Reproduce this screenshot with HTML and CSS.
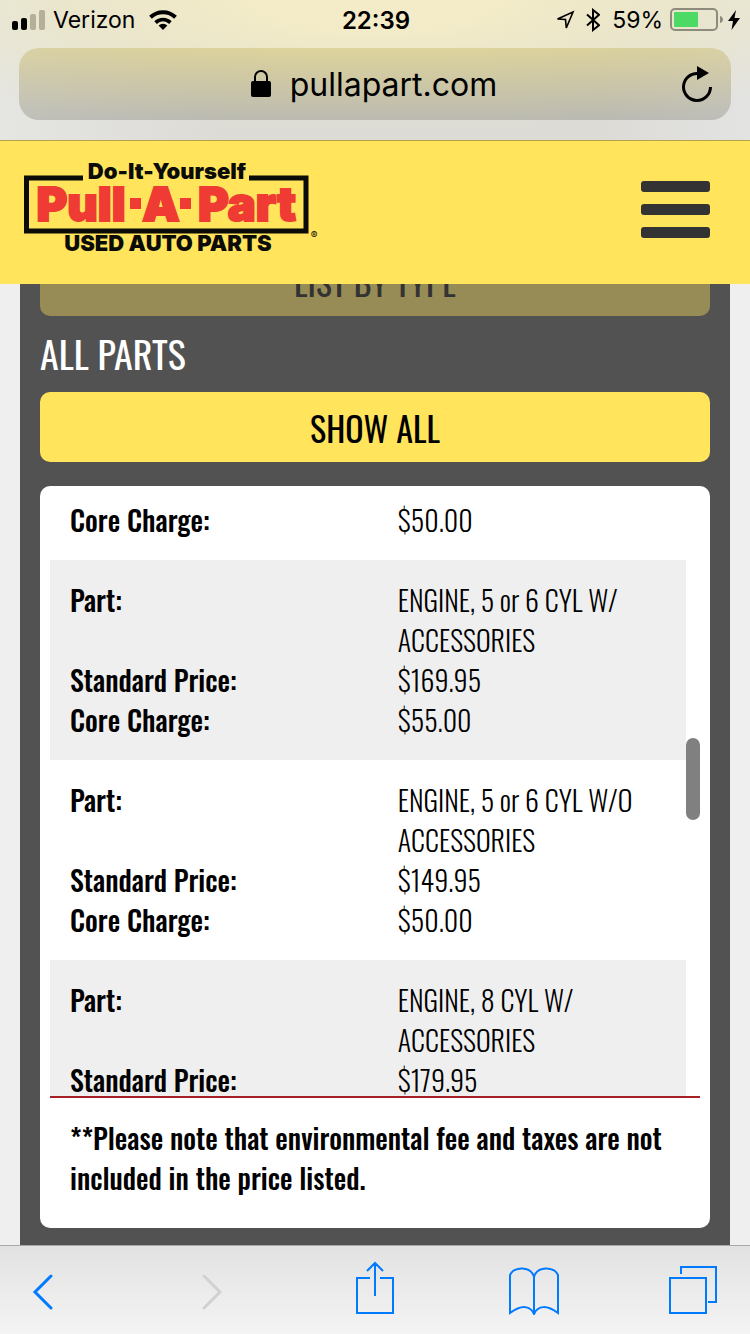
FILE: index.html
```html
<!DOCTYPE html>
<html lang="en">
  <head>
    <meta charset="UTF-8" />
    <meta name="viewport" content="width=device-width, initial-scale=1.0" />
    <title>Pull-A-Part - Used Auto Parts</title>
    <link rel="stylesheet" href="styles.css">
  </head>
  <body>
    <div class="browser-top">
      <div class="status">
        <div class="status-left">
          <svg width="34" height="20" viewBox="0 0 34 20">
            <rect x="0" y="11" width="6" height="9" rx="2" />
            <rect x="9" y="8" width="6" height="12" rx="2" />
            <rect x="18" y="4" width="6" height="16" rx="2" fill="#b3af99" />
            <rect x="27" y="0" width="6" height="20" rx="2" fill="#b3af99" />
          </svg>
          <span class="carrier">Verizon</span>
          <svg width="28" height="20" viewBox="0 0 28 20" fill="none" stroke="#000" stroke-width="4">
            <path d="M1.5 7.3a18 18 0 0 1 25 0" />
            <path d="M6.6 12.6a10.5 10.5 0 0 1 14.8 0" stroke-width="3.6" />
            <path d="M14 20l-4.4-4.4a6.2 6.2 0 0 1 8.8 0z" fill="#000" stroke="none" />
          </svg>
        </div>
        <div class="time">22:39</div>
        <div class="status-right">
          <svg width="20" height="20" viewBox="0 0 20 20" fill="none" stroke="#000" stroke-width="1.6">
            <path d="M18 2L2.5 9l8 .5.8 8.500z" />
          </svg>
          <svg class="bluetooth" width="14" height="24" viewBox="0 0 14 24" fill="none" stroke="#000" stroke-width="2">
            <path d="M1 6.500l12 10.700-6 4.800v-20l6 4.800-12 10.700" />
          </svg>
          <span>59%</span>
          <svg class="battery" width="54" height="24" viewBox="0 0 54 24">
            <rect x="1" y="1" width="46" height="21" rx="4" fill="none" stroke="#8f8b7c" stroke-width="2" />
            <rect x="4" y="4" width="24" height="15" rx="1" fill="#4cd964" />
            <path d="M50 8c4 1 4 6 0 7z" fill="#8f8b7c" />
          </svg>
          <svg width="12" height="20" viewBox="0 0 12 20">
            <path d="M8 0L0 11h5L3.500 20 12 8H6.500z" />
          </svg>
        </div>
      </div>
      <div class="address">
        <svg width="20" height="28" viewBox="0 0 20 28">
          <rect x="0" y="11" width="20" height="16" rx="2" />
          <path d="M4 12V7a6 6 0 0 1 12 0v5" fill="none" stroke="#000" stroke-width="2" />
        </svg>
        <span>pullapart.com</span>
        <button class="reload" aria-label="Reload">
          <svg width="32" height="36" viewBox="0 0 32 36">
            <path d="M17 7.500A13.500 13.500 0 1 0 29.500 21" fill="none" stroke="#000" stroke-width="3" />
            <path d="M16 0l12 7-12 7z" />
          </svg>
        </button>
      </div>
    </div>

    <header>
      <a href="#" class="logo" aria-label="Pull-A-Part home">
        <svg width="298" height="94" viewBox="0 3 298 94">
          <path d="M60 18H3.500v53H283V18h-57" fill="none" stroke="#0b0b08" stroke-width="5" />
          <text class="logo-top" x="144" y="19">Do-It-Yourself</text>
          <text class="logo-main" x="58" y="61">Pull</text>
          <rect x="107" y="38" width="11" height="11" fill="#ef3b33" />
          <text class="logo-main" x="138" y="61">A</text>
          <rect x="157" y="38" width="11" height="11" fill="#ef3b33" />
          <text class="logo-main" x="224" y="61">Part</text>
          <text class="logo-bottom" x="145" y="91">USED AUTO PARTS</text>
          <text class="logo-reg" x="291" y="79">®</text>
        </svg>
      </a>
      <button class="menu" aria-label="Menu">
        <i></i>
        <i></i>
        <i></i>
      </button>
    </header>

    <main>
      <div class="panel">
        <button class="btn" disabled>LIST BY TYPE</button>
        <h2>ALL PARTS</h2>
        <button class="btn">SHOW ALL</button>

        <div class="box">
          <div class="list">
            <dl>
              <dt>Core Charge:</dt>
              <dd>$50.00</dd>
            </dl>
            <dl>
              <dt>Part:</dt>
              <dd>ENGINE, 5 or 6 CYL W/ ACCESSORIES</dd>
              <dt>Standard Price:</dt>
              <dd>$169.95</dd>
              <dt>Core Charge:</dt>
              <dd>$55.00</dd>
            </dl>
            <dl>
              <dt>Part:</dt>
              <dd>ENGINE, 5 or 6 CYL W/O ACCESSORIES</dd>
              <dt>Standard Price:</dt>
              <dd>$149.95</dd>
              <dt>Core Charge:</dt>
              <dd>$50.00</dd>
            </dl>
            <dl>
              <dt>Part:</dt>
              <dd>ENGINE, 8 CYL W/ ACCESSORIES</dd>
              <dt>Standard Price:</dt>
              <dd>$179.95</dd>
            </dl>
            <div class="thumb"></div>
          </div>
          <p class="note">**Please note that environmental fee and taxes are not included in the price listed.</p>
        </div>
      </div>
    </main>

    <nav class="toolbar">
      <button class="back" aria-label="Back">
        <svg width="22" height="44" viewBox="0 -8 22 44" stroke-linecap="round">
          <path d="M19 2L3 18l16 16" />
        </svg>
      </button>
      <button class="forward" aria-label="Forward" disabled>
        <svg width="22" height="44" viewBox="0 -8 22 44" stroke-linecap="round">
          <path d="M3 2l16 16L3 34" />
        </svg>
      </button>
      <button aria-label="Share">
        <svg width="38" height="54" viewBox="0 0 38 54">
          <path d="M14 17H1v35h36V17H24M19 35V2M11 10l8-8 8 8" />
        </svg>
      </button>
      <button aria-label="Bookmarks">
        <svg width="50" height="54" viewBox="0 0 50 54">
          <path d="M25 53V16C22 5 5 5 1 14v38c11-8 20-8 24 1 4-9 13-9 24-1V14C45 5 28 5 25 16" />
        </svg>
      </button>
      <button aria-label="Tabs">
        <svg width="50" height="54" viewBox="0 0 50 54">
          <path d="M2 17h36v35H2zM13 13V6h35v35h-8" />
        </svg>
      </button>
    </nav>
  </body>
</html>
```
FILE: styles.css
```css
* {
  margin: 0;
  padding: 0;
  box-sizing: border-box;
}

body {
  display: flex;
  flex-direction: column;
  height: 100vh;
  background-color: #efefef;
  font-family: Oswald, "Liberation Sans Narrow", "Liberation Sans", sans-serif;
  color: #000;
}

button {
  border: 0;
  background: none;
  font-family: inherit;
}

svg {
  display: block;
}

/* browser chrome */
.browser-top {
  flex: none;
  padding: 0 19px 20px;
  border-bottom: 1px solid #b5a24c;
  background: radial-gradient(ellipse 75% 95% at 50% 0, #f4ecc8 20%, rgba(236, 231, 200, 0.8) 55%, rgba(220, 219, 214, 0) 100%), linear-gradient(90deg, #e5e5e2, #dcdbd6 30%, #dcdbd6 80%, #e3e3e2);
  font-family: Inter, "Liberation Sans", sans-serif;
}

.status {
  display: grid;
  grid-template-columns: 1fr auto 1fr;
  align-items: center;
  height: 48px;
  margin: 0 -9px 0 -7px;
  padding-bottom: 8px;
  font-size: 23px;
}

.status-left,
.status-right {
  display: flex;
  align-items: center;
}

.carrier {
  margin: 0 14px 0 7px;
}

.time {
  font-size: 24px;
  font-weight: 600;
}

.status-right {
  justify-content: flex-end;
}

.bluetooth {
  margin: 0 12px 0 11px;
}

.status-right span {
  margin-right: 7px;
}

.battery {
  margin-right: 4px;
}

.address {
  position: relative;
  display: flex;
  align-items: center;
  justify-content: center;
  gap: 19px;
  height: 72px;
  padding-right: 2px;
  border-radius: 20px;
  background: linear-gradient(rgba(190, 170, 70, 0.34), rgba(120, 120, 110, 0.34));
  font-size: 32px;
}

.reload {
  position: absolute;
  top: 18px;
  right: 18px;
}

/* site header */
header {
  display: flex;
  flex: none;
  align-items: center;
  justify-content: space-between;
  height: 143px;
  padding: 0 40px 6px 23px;
  background-color: #ffe45c;
}

.logo text {
  font-family: Inter, "Liberation Sans", sans-serif;
  font-weight: 900;
  fill: #0b0b08;
  text-anchor: middle;
}

.logo .logo-top {
  font-size: 22px;
}

.logo .logo-main {
  font-size: 47px;
  fill: #ef3b33;
  stroke: #ef3b33;
  stroke-width: 2px;
}

.logo .logo-bottom {
  font-size: 22px;
}

.logo .logo-reg {
  font-size: 10px;
  font-weight: 400;
}

.menu {
  display: flex;
  flex-direction: column;
  gap: 12px;
  width: 69px;
}

.menu i {
  height: 11px;
  border-radius: 3px;
  background-color: #333;
}

/* scrolled to the end, so the top slides under the header */
main {
  display: flex;
  flex: 1;
  flex-direction: column;
  justify-content: flex-end;
  min-height: 0;
  padding: 0 20px;
  overflow: hidden;
}

.panel {
  padding: 0 20px 17px;
  background-color: #525252;
}

.btn {
  display: block;
  width: 100%;
  height: 70px;
  border-radius: 10px;
  background-color: #ffe45c;
  color: #000;
  font-size: 34px;
}

.btn:disabled {
  background-color: #978c56;
  color: #333;
}

h2 {
  height: 76px;
  color: #fff;
  font-size: 38px;
  font-weight: 400;
  line-height: 74px;
}

.box {
  margin-top: 24px;
  padding: 10px;
  border-radius: 10px;
  background-color: #fff;
}

.list {
  position: relative;
  height: 600px;
  padding-right: 14px;
  overflow: hidden;
}

dl {
  display: grid;
  grid-template-columns: 55% 1fr;
  padding: 20px;
  font-size: 28px;
  font-weight: 300;
  line-height: 40px;
}

dl:first-child {
  padding-top: 4px;
}

dl:nth-child(even) {
  background-color: #efefef;
}

dt {
  font-weight: 500;
}

.thumb {
  position: absolute;
  top: 242px;
  right: 0;
  width: 14px;
  height: 82px;
  border-radius: 7px;
  background-color: #808080;
}

.note {
  padding: 20px;
  border-top: 2px solid #a51f25;
  font-size: 28px;
  font-weight: 500;
  line-height: 40px;
}

/* browser toolbar */
.toolbar {
  display: flex;
  flex: none;
  align-items: center;
  justify-content: space-between;
  height: 89px;
  padding: 0 32px 4px;
  border-top: 1px solid #a8a8a8;
  background: linear-gradient(#e2e2e2, #f4f4f4);
}

.toolbar button {
  display: flex;
  justify-content: center;
  width: 50px;
}

.toolbar .back {
  justify-content: flex-start;
}

.toolbar .forward {
  padding-right: 8px;
}

.toolbar svg {
  fill: none;
  stroke: #007aff;
  stroke-width: 2px;
}

.toolbar .back svg,
.toolbar .forward svg {
  stroke-width: 3px;
}

.toolbar button:disabled svg {
  stroke: #d1d1d1;
}
```
